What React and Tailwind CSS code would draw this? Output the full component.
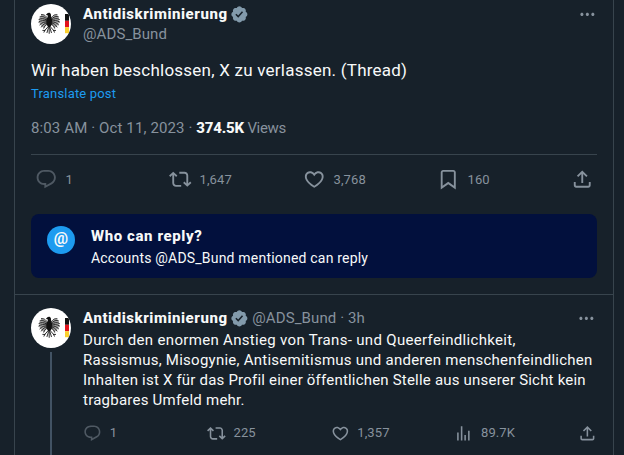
import clsx from 'clsx';

const ICONS = {
  reply: 'M1.751 10c0-4.42 3.584-8 8.005-8h4.366c4.49 0 8.129 3.64 8.129 8.13 0 2.96-1.607 5.68-4.196 7.11l-8.054 4.46v-3.69h-.067c-4.49.1-8.183-3.51-8.183-8.01zm8.005-6c-3.317 0-6.005 2.69-6.005 6 0 3.37 2.77 6.08 6.138 6.01l.351-.01h1.761v2.3l5.087-2.81c1.951-1.08 3.163-3.13 3.163-5.36 0-3.39-2.744-6.13-6.129-6.13H9.756z',
  repost: 'M4.5 3.88l4.432 4.14-1.364 1.46L5.5 7.55V16c0 1.1.896 2 2 2H13v2H7.5c-2.209 0-4-1.79-4-4V7.55L1.432 9.48.068 8.02 4.5 3.88zM16.5 6H11V4h5.5c2.209 0 4 1.79 4 4v8.45l2.068-1.93 1.364 1.46-4.432 4.14-4.432-4.14 1.364-1.46 2.068 1.93V8c0-1.1-.896-2-2-2z',
  like: 'M16.697 5.5c-1.222-.06-2.679.51-3.89 2.16l-.805 1.09-.806-1.09C9.984 6.01 8.526 5.44 7.304 5.5c-1.243.07-2.349.78-2.91 1.91-.552 1.12-.633 2.78.479 4.82 1.074 1.97 3.257 4.27 7.129 6.61 3.87-2.34 6.052-4.64 7.126-6.61 1.111-2.04 1.03-3.7.477-4.82-.561-1.13-1.666-1.84-2.908-1.91zm4.187 7.69c-1.351 2.48-4.001 5.12-8.379 7.67l-.503.3-.504-.3c-4.379-2.55-7.029-5.19-8.382-7.67-1.36-2.5-1.41-4.86-.514-6.67.887-1.79 2.647-2.91 4.601-3.01 1.651-.09 3.368.56 4.798 2.01 1.429-1.45 3.146-2.1 4.796-2.01 1.954.1 3.714 1.22 4.601 3.01.896 1.81.846 4.17-.514 6.67z',
  bookmark: 'M4 4.5C4 3.12 5.119 2 6.5 2h11C18.881 2 20 3.12 20 4.5v18.44l-8-5.71-8 5.71V4.5zM6.5 4c-.276 0-.5.22-.5.5v14.56l6-4.29 6 4.29V4.5c0-.28-.224-.5-.5-.5h-11z',
  views: 'M8.75 21V3h2v18h-2zM18 21V8.5h2V21h-2zM4 21l.004-10h2L6 21H4zm9.248 0v-7h2v7h-2z',
  share: 'M12 2.59l5.7 5.7-1.41 1.42L13 6.41V16h-2V6.41l-3.3 3.3-1.41-1.42L12 2.59zM21 15l-.02 3.51c0 1.38-1.12 2.49-2.5 2.49H5.5C4.11 21 3 19.88 3 18.5V15h2v3.5c0 .28.22.5.5.5h12.98c.28 0 .5-.22.5-.5L19 15h2z',
  more: 'M3 12c0-1.1.9-2 2-2s2 .9 2 2-.9 2-2 2-2-.9-2-2zm9 2c1.1 0 2-.9 2-2s-.9-2-2-2-2 .9-2 2 .9 2 2 2zm7 0c1.1 0 2-.9 2-2s-.9-2-2-2-2 .9-2 2 .9 2 2 2z',
};

const MAIN_ACTIONS = [
  { icon: 'reply', count: '1', dim: true },
  { icon: 'repost', count: '1,647' },
  { icon: 'like', count: '3,768' },
  { icon: 'bookmark', count: '160' },
  { icon: 'share' },
];

const REPLY_ACTIONS = [
  { icon: 'reply', count: '1', dim: true },
  { icon: 'repost', count: '225' },
  { icon: 'like', count: '1,357' },
  { icon: 'views', count: '89.7K' },
  { icon: 'share' },
];

const REPLY_LINES = [
  { text: 'Durch den enormen Anstieg von Trans- und Queerfeindlichkeit,', spacing: 'tracking-[0.32px]' },
  { text: 'Rassismus, Misogynie, Antisemitismus und anderen menschenfeindlichen', spacing: 'tracking-[0.25px]' },
  { text: 'Inhalten ist X für das Profil einer öffentlichen Stelle aus unserer Sicht kein', spacing: 'tracking-[0.2px]' },
  { text: 'tragbares Umfeld mehr.', spacing: 'tracking-[0.24px]' },
];

const Icon = ({ name, className }) => (
  <svg viewBox="0 0 24 24" className={clsx('shrink-0 fill-current', className)} aria-hidden="true">
    <path d={ICONS[name]} />
  </svg>
);

const VerifiedBadge = () => (
  <svg viewBox="0 0 22 22" className="size-[18.75px] shrink-0 fill-[#829aab]" aria-label="Verified">
    <path d="M20.396 11c-.018-.646-.215-1.275-.57-1.816-.354-.54-.852-.972-1.438-1.246.223-.607.27-1.264.14-1.897-.131-.634-.437-1.218-.882-1.687-.47-.445-1.053-.75-1.687-.882-.633-.13-1.29-.083-1.897.14-.273-.587-.704-1.086-1.245-1.44S11.647 1.62 11 1.604c-.646.017-1.273.213-1.813.568s-.969.854-1.24 1.44c-.608-.223-1.267-.272-1.902-.14-.635.13-1.22.436-1.69.882-.445.47-.749 1.055-.878 1.688-.13.633-.08 1.29.144 1.896-.587.274-1.087.705-1.443 1.245-.356.54-.555 1.17-.574 1.817.02.647.218 1.276.574 1.817.356.54.856.972 1.443 1.245-.224.606-.274 1.263-.144 1.896.13.634.433 1.218.877 1.688.47.443 1.054.747 1.687.878.633.132 1.29.084 1.897-.136.274.586.705 1.084 1.246 1.439.54.354 1.17.551 1.816.569.647-.016 1.276-.213 1.817-.567s.972-.854 1.245-1.44c.604.239 1.266.296 1.903.164.636-.132 1.22-.447 1.68-.907.46-.46.776-1.044.908-1.681s.075-1.299-.165-1.903c.586-.274 1.084-.705 1.439-1.246.354-.54.551-1.17.569-1.816zM9.662 14.85l-3.429-3.428 1.293-1.302 2.072 2.072 4.4-4.794 1.347 1.246z" />
  </svg>
);

/* Federal eagle with the flag stripe on the right */
const Avatar = () => (
  <svg viewBox="0 0 40 40" className="size-10 shrink-0 rounded-full bg-white" aria-hidden="true">
    <path
      d="M16.8 15.5l-3.6-4.3-2.8-.4-2 3.6-.4 4.2 2.4 3.4 2.4 2 2.4-2.6 1.6-.4zM19.6 15.5l3.6-4.3 2.8-.4 2 3.6.4 4.2-2.4 3.4-2.4 2-2.4-2.6-1.6-.4z"
      fill="#a8a8a8"
    />
    <g fill="none" stroke="#161616" strokeWidth="0.9" strokeLinecap="round">
      <path d="M16.6 14.6C14.8 11.4 12.6 10.2 10.4 10.6" />
      <path d="M16 15.2C13.6 12.6 11 12 9 12.8" />
      <path d="M15.8 16.2C13 14.2 10.2 14.2 8 15.4" />
      <path d="M15.8 17.2C13 16 10.2 16.4 7.8 18" />
      <path d="M15.8 18.2C13.4 17.6 11 18.4 8.8 20.8" />
      <path d="M15.8 19.2C14 19 12 20.4 10.4 23" />
      <path d="M16.2 20C14.8 20.4 13.6 22 12.8 24.2" />
      <path d="M19.8 14.6C21.6 11.4 23.8 10.2 26 10.6" />
      <path d="M20.4 15.2C22.8 12.6 25.4 12 27.4 12.8" />
      <path d="M20.6 16.2C23.4 14.2 26.2 14.2 28.4 15.4" />
      <path d="M20.6 17.2C23.4 16 26.2 16.4 28.6 18" />
      <path d="M20.6 18.2C23 17.6 25.4 18.4 27.6 20.8" />
      <path d="M20.6 19.2C22.4 19 24.4 20.4 26 23" />
      <path d="M20.2 20C21.6 20.4 22.8 22 23.6 24.2" />
      <path d="M17 22.8l-3.2 3.6M13.8 26.4l-2 0M13.8 26.4l-.8 1.8M19.4 22.8l3.2 3.6M22.6 26.4l2 0M22.6 26.4l.8 1.8" />
      <path d="M18.2 22v7.4M17.4 24l-1.4 4.6M19 24l1.4 4.6" />
    </g>
    <path d="M14.8 11l1.6-1.8c1.2-1.1 3.2-.5 3.5 1l.2 3 1 2.6-.4 4.8-1.6 3h-1.8l-1.6-3-.4-4.8 1.4-2.8v-1.8z" fill="#111" />
    <rect x="34" y="10" width="4" height="6.8" fill="#111" />
    <rect x="34" y="16.8" width="4" height="6.4" fill="#e3121b" />
    <rect x="34" y="23.2" width="4" height="6" fill="#fbd02e" />
  </svg>
);

const ActionBar = ({ actions, small }) => (
  <div className="flex items-center text-[#87929d]">
    {actions.map(({ icon, count, dim }) => (
      <div
        key={icon}
        className={clsx(
          'flex items-center gap-2 text-[13px] leading-4',
          icon !== 'share' && (small ? 'w-[123.75px]' : 'w-[134px]'),
        )}
      >
        <Icon
          name={icon}
          className={clsx(small ? 'size-[18.75px]' : 'size-[22.5px]', dim && 'opacity-50')}
        />
        {count && <span className={clsx('tracking-[0.1px]', !small && 'pt-px')}>{count}</span>}
      </div>
    ))}
  </div>
);

const App = () => (
  <div className="h-[455px] overflow-hidden bg-[#17212a] pl-[14px] font-['Roboto','Liberation_Sans',sans-serif] text-[15px] leading-5 text-[#f7f9f9]">
    <main className="h-full w-[600px] border-x border-[#38444d]">
      {/* Main post */}
      <article className="h-[294px] px-4 pt-1">
        <header className="flex gap-3">
          <Avatar />
          <div className="flex-1">
            <div className="flex items-center gap-0.5">
              <span className="font-extrabold tracking-[0.55px]">Antidiskriminierung</span>
              <VerifiedBadge />
            </div>
            <div className="tracking-[0.1px] text-[#87929d]">@ADS_Bund</div>
          </div>
          <Icon name="more" className="mt-[1px] size-[18.75px] text-[#87929d]" />
        </header>

        <p className="mt-3.5 text-[17px] leading-6 tracking-[0.23px]">Wir haben beschlossen, X zu verlassen. (Thread)</p>
        <div className="mt-1 text-[13px] leading-4 tracking-[0.18px] text-[#1d9bf0]">Translate post</div>
        <div className="mt-4 text-[#87929d]">
          <span className="tracking-[0.12px]">8:03 AM · Oct 11, 2023 · </span>
          <span className="font-extrabold tracking-[-0.15px] text-[#f7f9f9]">374.5K</span>
          <span className="tracking-[-0.35px]"> Views</span>
        </div>

        <div className="mt-4 border-t border-[#38444d] pt-[13px] pl-1">
          <ActionBar actions={MAIN_ACTIONS} />
        </div>

        <div className="mt-[23px] flex h-16 gap-4 rounded-lg bg-[#02103d] px-4 pt-3">
          <div className="flex size-7 items-center justify-center rounded-full bg-[#1d9bf0] pb-0.5 text-[16px] font-bold">
            @
          </div>
          <div>
            <div className="font-extrabold tracking-[0.6px]">Who can reply?</div>
            <div className="mt-0.5 text-[14px] tracking-[0.2px]">Accounts @ADS_Bund mentioned can reply</div>
          </div>
        </div>
      </article>

      {/* Thread reply */}
      <article className="flex h-[161px] gap-3 border-t border-[#38444d] px-4 pt-[13px]">
        <div className="flex flex-col items-center">
          <Avatar />
          <div className="mt-1 w-0.5 flex-1 bg-[#425364]" />
        </div>
        <div className="flex-1">
          <div className="flex items-center">
            <span className="font-extrabold tracking-[0.55px]">Antidiskriminierung</span>
            <span className="ml-0.5"><VerifiedBadge /></span>
            <span className="ml-1 tracking-[0.1px] text-[#87929d]">@ADS_Bund · 3h</span>
            <Icon name="more" className="mr-px ml-auto size-[18.75px] text-[#87929d]" />
          </div>
          <div className="mt-0.5">
            {REPLY_LINES.map(({ text, spacing }) => (
              <p key={text} className={clsx('whitespace-nowrap', spacing)}>{text}</p>
            ))}
          </div>
          <div className="mt-3.5">
            <ActionBar actions={REPLY_ACTIONS} small />
          </div>
        </div>
      </article>
    </main>
  </div>
);

export default App;
